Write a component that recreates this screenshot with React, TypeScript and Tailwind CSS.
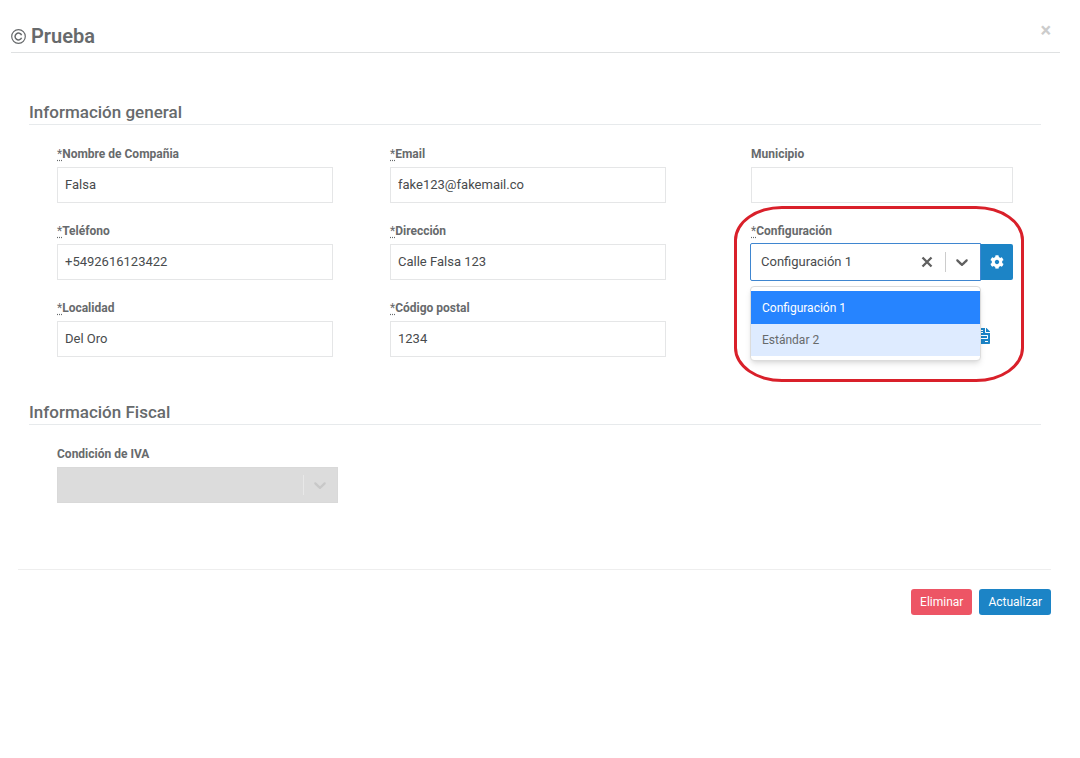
import { useState } from "react";
import type { ReactNode } from "react";
import { FaCog, FaFileInvoice } from "react-icons/fa";

const configurations = ["Configuración 1", "Estándar 2"];

export default function App() {
    return (
        <div className="min-h-screen bg-white font-['Roboto',sans-serif] text-[13px] text-[#676a6c]">
            <Header />
            <form className="px-[18px] pt-[49px]" onSubmit={(e) => e.preventDefault()}>
                <div className="pr-[21px] pl-[11px]">
                    <GeneralSection />
                    <FiscalSection />
                </div>
                <Footer />
            </form>
        </div>
    )
}

function Header() {
    return (
        <header className="mr-5 ml-[11px] flex h-[53px] items-start justify-between border-b border-[#dfe1e2]">
            <h1 className="flex items-center gap-1 pt-6 text-xl leading-6 font-semibold">
                <CopyrightIcon />
                Prueba
            </h1>
            <button type="button" aria-label="Cerrar" className="mt-5 mr-[9px] text-xl leading-5 font-bold text-[#cccccc]">
                ×
            </button>
        </header>
    )
}

function SectionTitle({ children }: { children: ReactNode }) {
    return (
        <h2 className="border-b border-[#e7eaec] pb-0.5 text-[17px] leading-5 font-medium">{children}</h2>
    )
}

function Label({ id, text, required }: { id: string, text: string, required?: boolean }) {
    return (
        <label htmlFor={id} className="mb-1 block text-xs leading-[18px] font-bold">
            {required && <abbr title="requerido" className="font-normal underline decoration-dotted underline-offset-2">*</abbr>}
            {text}
        </label>
    )
}

type FieldProps = {
    id: string
    label: string
    value?: string
    type?: string
    required?: boolean
}

function Field({ id, label, value = "", type = "text", required }: FieldProps) {
    return (
        <div>
            <Label id={id} text={label} required={required} />
            <input
                id={id}
                type={type}
                defaultValue={value}
                className="block h-9 w-full border border-[#e5e6e7] bg-white px-[7px] pb-px text-[13px] text-[#484b4d] outline-none"
            />
        </div>
    )
}

function GeneralSection() {
    return (
        <section>
            <SectionTitle>Información general</SectionTitle>
            <div className="grid grid-cols-[276fr_304fr_262fr] gap-x-[57px] px-7 pt-5">
                <div className="grid content-start gap-[19px]">
                    <Field id="name" label="Nombre de Compañia" value="Falsa" required />
                    <Field id="phone" label="Teléfono" value="+5492616123422" type="tel" required />
                    <Field id="city" label="Localidad" value="Del Oro" required />
                </div>
                <div className="grid content-start gap-[19px] pr-7">
                    <Field id="email" label="Email" value="fake123@fakemail.co" type="email" required />
                    <Field id="address" label="Dirección" value="Calle Falsa 123" required />
                    <Field id="zip" label="Código postal" value="1234" required />
                </div>
                <div className="grid content-start gap-[19px]">
                    <Field id="town" label="Municipio" />
                    <ConfigurationField />
                </div>
            </div>
        </section>
    )
}

function ConfigurationField() {
    const [selected, setSelected] = useState(configurations[0]);
    const [open, setOpen] = useState(true);

    return (
        <div className="relative">
            <Label id="configuration" text="Configuración" required />
            <div className="flex">
                <div className="relative -my-px -ml-px grow">
                    <select
                        id="configuration"
                        value={selected}
                        onChange={(e) => setSelected(e.target.value)}
                        className="block h-[38px] w-full appearance-none rounded-l-xs border border-[#3f86d0] bg-white px-[10px] text-[13px] text-[#484b4d] outline-none"
                    >
                        <option value=""></option>
                        {configurations.map((name) => <option key={name}>{name}</option>)}
                    </select>
                    <div className="absolute inset-y-2 right-[9px] flex items-center">
                        <button type="button" aria-label="Limpiar" onClick={() => setSelected("")} className="pr-[5px] text-[#606060]">
                            <CrossIcon />
                        </button>
                        <span className="mx-1 h-5 w-px bg-[#cccccc]" />
                        <button type="button" aria-label="Abrir" onClick={() => setOpen(!open)} className="pl-0.5 text-[#606060]">
                            <ChevronIcon />
                        </button>
                    </div>
                    {open && (
                        <ul role="listbox" className="absolute inset-x-0 top-full z-10 mt-[5px] rounded border border-[#dcdcdc] bg-white py-1 text-xs shadow-md">
                            {configurations.map((name) => (
                                <li
                                    key={name}
                                    role="option"
                                    aria-selected={name === selected}
                                    onClick={() => setSelected(name)}
                                    className={name === selected ? "bg-[#2684ff] px-[11px] pt-px leading-8 text-white" : "bg-[#deebff] px-[11px] leading-8"}
                                >
                                    {name}
                                </li>
                            ))}
                        </ul>
                    )}
                </div>
                <button type="button" aria-label="Configurar" className="flex w-8 items-center justify-center rounded-r-xs bg-[#1c84c6] text-white">
                    <FaCog className="size-[14px]" />
                </button>
            </div>
            <a href="#detalle" aria-label="Ver detalle" className="mt-12 mr-[21px] flex justify-end text-[#1c84c6]">
                <FaFileInvoice className="size-4" />
            </a>
            <div className="pointer-events-none absolute -top-4 -right-[11px] -left-[17px] z-20 h-[176px] rounded-[48px/34px] border-3 border-[#d9202a]" />
        </div>
    )
}

function FiscalSection() {
    return (
        <section className="pt-[45px]">
            <SectionTitle>Información Fiscal</SectionTitle>
            <div className="px-7 pt-5">
                <Label id="iva" text="Condición de IVA" />
                <div className="relative w-[281px]">
                    <select id="iva" disabled className="block h-9 w-full appearance-none border border-[#d9d9d9] bg-[#dcdcdc] opacity-100" />
                    <div className="pointer-events-none absolute inset-y-2 right-2 flex items-center text-[#c8c8c8]">
                        <span className="mx-1 h-5 w-px bg-[#e8e8e8]" />
                        <span className="pl-0.5"><ChevronIcon /></span>
                    </div>
                </div>
            </div>
        </section>
    )
}

function Footer() {
    return (
        <footer className="mt-[66px] mr-[11px] flex justify-end gap-[7px] border-t border-[#eeeeee] pt-[19px] text-xs text-white">
            <button type="button" className="h-[26px] rounded-[3px] bg-[#ed5565] px-[9px]">Eliminar</button>
            <button type="submit" className="h-[26px] rounded-[3px] bg-[#1c84c6] px-[9px]">Actualizar</button>
        </footer>
    )
}

function CopyrightIcon() {
    return (
        <svg viewBox="0 0 16 16" className="size-4" fill="none" stroke="currentColor" strokeWidth="1.2">
            <circle cx="7.5" cy="8.5" r="6.8" />
            <path d="M10.6 9.8a3.4 3.4 0 1 1 0-2.6" strokeWidth="1.5" />
        </svg>
    )
}

function CrossIcon() {
    return (
        <svg viewBox="0 0 20 20" className="size-[18px]" fill="none" stroke="currentColor" strokeWidth="2.6">
            <path d="M5 5l10 10M15 5l-10 10" />
        </svg>
    )
}

function ChevronIcon() {
    return (
        <svg viewBox="0 0 20 20" className="size-5" fill="currentColor">
            <path d="M4.516 7.548c0.436-0.446 1.043-0.481 1.576 0l3.908 3.747 3.908-3.747c0.533-0.481 1.141-0.446 1.574 0 0.436 0.445 0.408 1.197 0 1.615-0.406 0.418-4.695 4.502-4.695 4.502-0.217 0.223-0.502 0.335-0.787 0.335s-0.57-0.112-0.789-0.335c0 0-4.287-4.084-4.695-4.502s-0.436-1.17 0-1.615z" />
        </svg>
    )
}
